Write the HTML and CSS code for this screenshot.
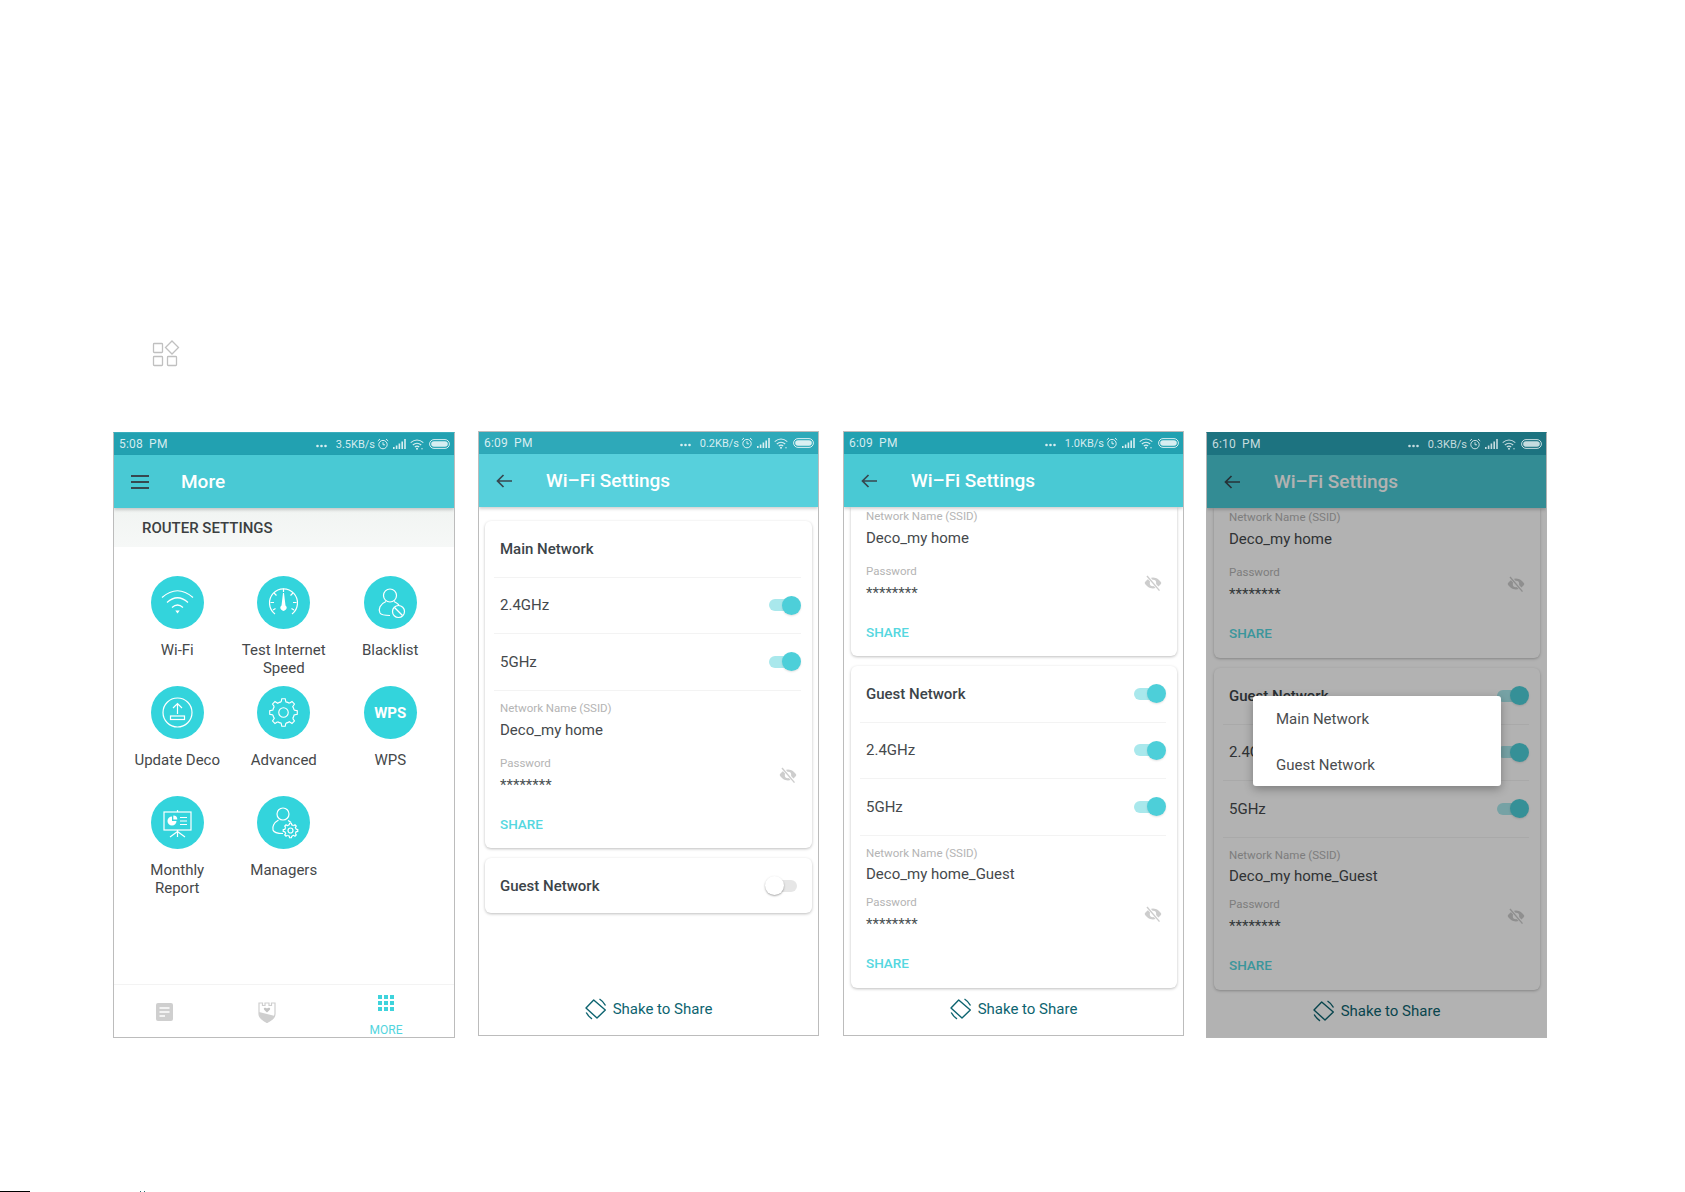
FILE: index.html
```html
<!DOCTYPE html>
<html lang="en">
<head>
<meta charset="utf-8">
<title>Wi-Fi Settings</title>
<link rel="stylesheet" href="styles.css">
</head>
<body>
<svg class="sprite" width="0" height="0" aria-hidden="true">
  <defs>
    <g id="gear-seg"><path d="M-2.5 -11.2 L-1.8 -14.5 L1.8 -14.5 L2.5 -11.2 A11.5 11.5 0 0 1 6.15 -9.69"/></g>
    <g id="gear">
      <use href="#gear-seg"/><use href="#gear-seg" transform="rotate(45)"/><use href="#gear-seg" transform="rotate(90)"/><use href="#gear-seg" transform="rotate(135)"/>
      <use href="#gear-seg" transform="rotate(180)"/><use href="#gear-seg" transform="rotate(225)"/><use href="#gear-seg" transform="rotate(270)"/><use href="#gear-seg" transform="rotate(315)"/>
    </g>
    <symbol id="st-dots" viewBox="0 0 11 4"><circle cx="1.5" cy="2" r="1.3"/><circle cx="5.5" cy="2" r="1.3"/><circle cx="9.5" cy="2" r="1.3"/></symbol>
    <symbol id="st-alarm" viewBox="0 0 12 12"><g fill="none" stroke="currentColor"><circle cx="6" cy="6.6" r="4.2"/><path d="M6 4.2V6.8H8M.8 3 3 1M11.2 3 9 1"/></g></symbol>
    <symbol id="st-signal" viewBox="0 0 13 10"><rect x="0" y="8" width="1.6" height="2"/><rect x="2.8" y="6.5" width="1.6" height="3.5"/><rect x="5.6" y="4.5" width="1.6" height="5.5"/><rect x="8.4" y="2.5" width="1.6" height="7.5"/><rect x="11.2" y="0" width="1.6" height="10"/></symbol>
    <symbol id="st-wifi" viewBox="0 0 14 11"><g fill="none" stroke="currentColor" stroke-width="1.1"><path d="M.7 3.6Q7-1.6 13.3 3.6"/><path d="M2.8 6Q7 2.4 11.2 6"/><path d="M4.8 8Q7 6.2 9.2 8"/></g><circle cx="7" cy="9.8" r="1"/><circle cx="12" cy="9.8" r=".7"/></symbol>
    <symbol id="st-batt" viewBox="0 0 21 10"><rect x=".6" y=".6" width="19.8" height="8.8" rx="4.4" fill="none" stroke="currentColor"/><rect x="2.2" y="2.2" width="16.6" height="5.6" rx="2.8"/></symbol>
    <symbol id="eye" viewBox="0 0 18 18"><path fill-rule="evenodd" d="M9 3.5C5 3.5 2 6.5.6 9 2 11.5 5 14.5 9 14.5s7-3 8.4-5.5C16 6.5 13 3.5 9 3.5zM9 5.8a3.2 3.2 0 1 1 0 6.4 3.2 3.2 0 0 1 0-6.4z"/><path d="M3.5 2.2 15.5 16.2" stroke="#fff" stroke-width="3"/><path d="M3 2 15.5 16.6" stroke="currentColor" stroke-width="1.4"/></symbol>
    <symbol id="shake" viewBox="0 0 22 22"><g fill="none" stroke="currentColor" stroke-width="1.4" stroke-linejoin="round"><path d="M8.700 2 20.300 12 12 20 1 10Z"/><path d="M14.500 1Q18.500 3.500 20.500 7.500"/><path d="M1.200 14.500Q3.500 18.500 7 20.800"/></g></symbol>
  </defs>
</svg>

<div class="page">
  <svg class="top-icon" viewBox="0 0 30 28" width="30" height="28">
    <g fill="none" stroke="#c0c0c0" stroke-width="1.3">
      <rect x="3.5" y="3.5" width="9" height="9" rx=".8"/>
      <path d="M22 1 28.5 7.5 22 14 15.5 7.5Z"/>
      <rect x="3.5" y="16.5" width="9" height="9" rx=".8"/>
      <rect x="17.5" y="16.5" width="9" height="9" rx=".8"/>
    </g>
  </svg>

  <main class="stage">
    <!-- More -->
    <section class="phone phone--more">
      <div class="status">
        <span class="time">5:08 PM</span>
        <svg class="st-dots"><use href="#st-dots"/></svg>
        <span class="speed">3.5KB/s</span>
        <svg class="st-alarm"><use href="#st-alarm"/></svg>
        <svg class="st-signal"><use href="#st-signal"/></svg>
        <svg class="st-wifi"><use href="#st-wifi"/></svg>
        <svg class="st-batt"><use href="#st-batt"/></svg>
      </div>
      <header class="appbar">
        <span class="burger"><i></i><i></i><i></i></span>
        <h1 class="appbar-title">More</h1>
      </header>
      <div class="section-head">ROUTER SETTINGS</div>
      <div class="tiles">
        <div class="tile">
          <svg class="tile-icon" viewBox="0 0 53 53"><circle class="disc" cx="26.5" cy="26.5" r="26.5"/><g class="ln"><path d="M11 21.5Q26.5 8 42 21.5"/><path d="M16 26.5Q26.5 17 37 26.5"/><path d="M21 31.5Q26.5 26.5 32 31.5"/></g><path class="sol" d="M24.3 34.5H28.7L26.5 37.5Z"/></svg>
          <span class="tile-label">Wi-Fi</span>
        </div>
        <div class="tile">
          <svg class="tile-icon" viewBox="0 0 53 53"><circle class="disc" cx="26.5" cy="26.5" r="26.5"/><g class="ln"><path d="M18 38A14 14 0 1 1 35 38"/><path d="M26.5 12.500V16M13.500 26.500H17M39.500 26.500H36M17 17 19.500 19.500M36 17 33.500 19.500M16 34 18.500 32.500M37 34 34.500 32.500"/></g><path class="sol" d="M26 17H27L28.500 29.500A3 3 0 1 1 24.500 29.500Z"/></svg>
          <span class="tile-label">Test Internet<br>Speed</span>
        </div>
        <div class="tile">
          <svg class="tile-icon" viewBox="0 0 53 53"><circle class="disc" cx="26.5" cy="26.5" r="26.500"/><g class="ln"><circle cx="26" cy="19.500" r="6.500"/><path d="M22 25.500C16 28 14 33 16 37 17.500 39.500 21 39.500 26 39.500"/><path d="M30 25.500C32 26.500 33.500 27.500 35 29"/><circle cx="34.500" cy="35.500" r="6"/><path d="M30.500 31.500 38.500 39.500"/></g></svg>
          <span class="tile-label">Blacklist</span>
        </div>
        <div class="tile">
          <svg class="tile-icon" viewBox="0 0 53 53"><circle class="disc" cx="26.5" cy="26.5" r="26.500"/><g class="ln"><circle cx="26.500" cy="26.500" r="14.500"/><path d="M26.500 28V18M22 22 26.500 17.500 31 22"/><rect x="19.500" y="30" width="14" height="3.500"/></g></svg>
          <span class="tile-label">Update Deco</span>
        </div>
        <div class="tile">
          <svg class="tile-icon" viewBox="0 0 53 53"><circle class="disc" cx="26.5" cy="26.5" r="26.500"/><g class="ln" transform="translate(26.500 26.500) scale(.95)"><use href="#gear"/><circle r="5"/></g></svg>
          <span class="tile-label">Advanced</span>
        </div>
        <div class="tile">
          <span class="tile-icon tile-icon--text">WPS</span>
          <span class="tile-label">WPS</span>
        </div>
        <div class="tile">
          <svg class="tile-icon" viewBox="0 0 53 53"><circle class="disc" cx="26.5" cy="26.5" r="26.500"/><g class="ln"><rect x="13" y="16" width="27" height="18"/><path d="M26.500 14V16M26.500 34V38M19 41 26.500 35.500 34 41M26.500 38V41"/><path d="M29 21.500H36M29 25H36M29 28.500H36"/></g><path class="sol" d="M21 20.500A4.500 4.500 0 1 0 25.500 25H21ZM22.300 19.500V23.500H26.300A4 4 0 0 0 22.300 19.500Z"/></svg>
          <span class="tile-label">Monthly<br>Report</span>
        </div>
        <div class="tile">
          <svg class="tile-icon" viewBox="0 0 53 53"><circle class="disc" cx="26.5" cy="26.5" r="26.500"/><g class="ln"><circle cx="26" cy="18" r="6"/><path d="M21.500 24C17 26.500 15 31 16 34 17 37 20 37.500 26 37.500"/><path d="M31 24.500C32 25 33 25.500 34 26.500"/><g transform="translate(33.500 34.500) scale(.5)" stroke-width="2.400"><use href="#gear"/><circle r="5"/></g></g></svg>
          <span class="tile-label">Managers</span>
        </div>
      </div>
      <nav class="tabs">
        <div class="tab tab--low">
          <svg class="tab-doc" viewBox="0 0 17 18"><rect width="17" height="18" rx="2" fill="#cfcfcf"/><path d="M3.500 5H13.500M3.500 9H13.500M3.500 13H9" stroke="#fff" stroke-width="1.600"/></svg>
        </div>
        <div class="tab tab--low">
          <svg class="tab-shield" viewBox="0 0 18 21"><path d="M1 1V12C1 16 5 18.500 9 20.500 13 18.500 17 16 17 12V1L13.500 1V3.500H11V1H7V3.500H4.500V1Z" fill="#fff" stroke="#cfcfcf" stroke-width="1.200"/><path d="M1 10 17 14C16 17 13 18.500 9 20.500 5 18.500 2 16 1 12Z" fill="#cfcfcf"/><path d="M9 10.500C7 8.500 5.800 8 5.800 6.800 5.800 5.500 7.800 5.200 9 6.500 10.200 5.200 12.200 5.500 12.200 6.800 12.200 8 11 8.500 9 10.500Z" fill="#c4c4c4"/></svg>
        </div>
        <div class="tab tab--active">
          <svg class="tab-grid" viewBox="0 0 16 16"><g fill="#3ed3dc"><rect width="4" height="4"/><rect x="6" width="4" height="4"/><rect x="12" width="4" height="4"/><rect y="6" width="4" height="4"/><rect x="6" y="6" width="4" height="4"/><rect x="12" y="6" width="4" height="4"/><rect y="12" width="4" height="4"/><rect x="6" y="12" width="4" height="4"/><rect x="12" y="12" width="4" height="4"/></g></svg>
          <span class="tab-label">MORE</span>
        </div>
      </nav>
    </section>

    <!-- Wi-Fi Settings, main network only -->
    <section class="phone phone--settings phone--light">
      <div class="status">
        <span class="time">6:09 PM</span>
        <svg class="st-dots"><use href="#st-dots"/></svg>
        <span class="speed">0.2KB/s</span>
        <svg class="st-alarm"><use href="#st-alarm"/></svg>
        <svg class="st-signal"><use href="#st-signal"/></svg>
        <svg class="st-wifi"><use href="#st-wifi"/></svg>
        <svg class="st-batt"><use href="#st-batt"/></svg>
      </div>
      <header class="appbar">
        <svg class="back" viewBox="0 0 16 14"><path d="M16 7H1.500M7.500 1 1.500 7 7.500 13" fill="none" stroke="currentColor" stroke-width="1.700"/></svg>
        <h1 class="appbar-title">Wi–Fi Settings</h1>
      </header>
      <div class="content content--padded">
        <div class="card">
          <div class="row"><strong class="row-title">Main Network</strong></div>
          <div class="row"><span>2.4GHz</span><span class="toggle"></span></div>
          <div class="row"><span>5GHz</span><span class="toggle"></span></div>
          <div class="fields">
            <div class="field-label">Network Name (SSID)</div>
            <div class="field-value">Deco_my home</div>
            <div class="pw">
              <div>
                <div class="field-label">Password</div>
                <div class="stars">********</div>
              </div>
              <svg class="eye"><use href="#eye"/></svg>
            </div>
            <div class="share">SHARE</div>
          </div>
        </div>
        <div class="card">
          <div class="row row--last"><strong class="row-title">Guest Network</strong><span class="toggle toggle--off"></span></div>
        </div>
      </div>
      <div class="shake"><svg class="shake-icon"><use href="#shake"/></svg><span>Shake to Share</span></div>
    </section>

    <!-- Wi-Fi Settings, scrolled -->
    <section class="phone phone--settings phone--scrolled">
      <div class="status">
        <span class="time">6:09 PM</span>
        <svg class="st-dots"><use href="#st-dots"/></svg>
        <span class="speed">1.0KB/s</span>
        <svg class="st-alarm"><use href="#st-alarm"/></svg>
        <svg class="st-signal"><use href="#st-signal"/></svg>
        <svg class="st-wifi"><use href="#st-wifi"/></svg>
        <svg class="st-batt"><use href="#st-batt"/></svg>
      </div>
      <header class="appbar">
        <svg class="back" viewBox="0 0 16 14"><path d="M16 7H1.500M7.500 1 1.500 7 7.500 13" fill="none" stroke="currentColor" stroke-width="1.700"/></svg>
        <h1 class="appbar-title">Wi–Fi Settings</h1>
      </header>
      <div class="content">
        <div class="card card--cut">
          <div class="fields fields--cut">
            <div class="field-label">Network Name (SSID)</div>
            <div class="field-value">Deco_my home</div>
            <div class="pw">
              <div>
                <div class="field-label">Password</div>
                <div class="stars">********</div>
              </div>
              <svg class="eye"><use href="#eye"/></svg>
            </div>
            <div class="share">SHARE</div>
          </div>
        </div>
        <div class="card">
          <div class="row"><strong class="row-title">Guest Network</strong><span class="toggle"></span></div>
          <div class="row"><span>2.4GHz</span><span class="toggle"></span></div>
          <div class="row"><span>5GHz</span><span class="toggle"></span></div>
          <div class="fields fields--tight">
            <div class="field-label">Network Name (SSID)</div>
            <div class="field-value">Deco_my home_Guest</div>
            <div class="pw">
              <div>
                <div class="field-label">Password</div>
                <div class="stars">********</div>
              </div>
              <svg class="eye"><use href="#eye"/></svg>
            </div>
            <div class="share">SHARE</div>
          </div>
        </div>
      </div>
      <div class="shake"><svg class="shake-icon"><use href="#shake"/></svg><span>Shake to Share</span></div>
    </section>

    <!-- Wi-Fi Settings, share menu open -->
    <section class="phone phone--settings phone--scrolled phone--dim">
      <div class="status">
        <span class="time">6:10 PM</span>
        <svg class="st-dots"><use href="#st-dots"/></svg>
        <span class="speed">0.3KB/s</span>
        <svg class="st-alarm"><use href="#st-alarm"/></svg>
        <svg class="st-signal"><use href="#st-signal"/></svg>
        <svg class="st-wifi"><use href="#st-wifi"/></svg>
        <svg class="st-batt"><use href="#st-batt"/></svg>
      </div>
      <header class="appbar">
        <svg class="back" viewBox="0 0 16 14"><path d="M16 7H1.500M7.500 1 1.500 7 7.500 13" fill="none" stroke="currentColor" stroke-width="1.700"/></svg>
        <h1 class="appbar-title">Wi–Fi Settings</h1>
      </header>
      <div class="content">
        <div class="card card--cut">
          <div class="fields fields--cut fields--cut-tall">
            <div class="field-label">Network Name (SSID)</div>
            <div class="field-value">Deco_my home</div>
            <div class="pw">
              <div>
                <div class="field-label">Password</div>
                <div class="stars">********</div>
              </div>
              <svg class="eye"><use href="#eye"/></svg>
            </div>
            <div class="share">SHARE</div>
          </div>
        </div>
        <div class="card">
          <div class="row"><strong class="row-title">Guest Network</strong><span class="toggle"></span></div>
          <div class="row"><span>2.4GHz</span><span class="toggle"></span></div>
          <div class="row"><span>5GHz</span><span class="toggle"></span></div>
          <div class="fields fields--tight">
            <div class="field-label">Network Name (SSID)</div>
            <div class="field-value">Deco_my home_Guest</div>
            <div class="pw">
              <div>
                <div class="field-label">Password</div>
                <div class="stars">********</div>
              </div>
              <svg class="eye"><use href="#eye"/></svg>
            </div>
            <div class="share">SHARE</div>
          </div>
        </div>
      </div>
      <div class="shake"><svg class="shake-icon"><use href="#shake"/></svg><span>Shake to Share</span></div>
      <div class="scrim"></div>
      <div class="menu">
        <div class="menu-item">Main Network</div>
        <div class="menu-item">Guest Network</div>
      </div>
    </section>
  </main>

  <footer class="edge">
    <span class="edge-rule"></span>
    <span class="edge-tick"></span>
    <span class="edge-tick"></span>
  </footer>
</div>
</body>
</html>
```

FILE: styles.css
```css
* { box-sizing: border-box; }

html, body {
  margin: 0;
  height: 1192px;
  overflow: hidden;
  background: #fff;
  font-family: Roboto, "Liberation Sans", sans-serif;
}

.sprite { position: absolute; }

.page {
  height: 1192px;
  display: flex;
  flex-direction: column;
  align-items: flex-start;
}

.top-icon {
  display: block;
  margin: 340px 0 0 150px;
  flex: none;
}

.stage {
  display: flex;
  align-items: flex-start;
  gap: 23px;
  margin: 63px 0 0 113px;
}

/* Phone frame */
.phone {
  --status: #22a1b1;
  --bar: #49c9d4;
  position: relative;
  flex: none;
  width: 342px;
  height: 605px;
  display: flex;
  flex-direction: column;
  overflow: hidden;
  background: #fff;
  border: 1px solid #bcbcbc;
  color: #444;
}

.phone--settings { width: 341px; }

.phone--more {
  height: 606px;
  margin-top: 1px;
  border-top-color: #3aaebd;
}

.phone--light {
  --status: #2ea9b9;
  --bar: #57d0dc;
}

.phone--scrolled { margin-left: 1px; }

.phone--dim {
  height: 606px;
  margin: 1px 0 0 -1px;
  border-color: #b3b3b3;
  border-top-color: #1d7380;
}

/* Status bar */
.status {
  flex: none;
  height: 22px;
  display: flex;
  align-items: center;
  padding: 0 4px 0 5px;
  background: var(--status);
  color: rgba(255, 255, 255, .82);
  font-size: 12px;
}

.phone--dim .status {
  position: relative;
  z-index: 4;
  background: #1d7380;
  color: rgba(255, 255, 255, .75);
}

.time { word-spacing: 3px; letter-spacing: .2px; }
.speed { font-size: 11px; margin-left: 9px; }

.status svg { fill: currentColor; flex: none; display: block; }
.st-dots { width: 11px; height: 4px; margin-left: auto; margin-top: 4px; }
.st-alarm { width: 12px; height: 12px; margin-left: 2px; }
.st-signal { width: 13px; height: 10px; margin-left: 4px; }
.st-wifi { width: 14px; height: 11px; margin-left: 4px; }
.st-batt { width: 21px; height: 10px; margin-left: 5px; }

/* App bar */
.appbar {
  flex: none;
  position: relative;
  z-index: 2;
  height: 53px;
  display: flex;
  align-items: center;
  background: var(--bar);
  box-shadow: 0 2px 3px rgba(0, 0, 0, .18);
  color: #fff;
}

.appbar-title {
  margin: 0;
  font-size: 19px;
  font-weight: 500;
  line-height: 24px;
}

.burger {
  display: flex;
  flex-direction: column;
  gap: 4px;
  width: 18px;
  margin: 0 32px 0 17px;
}

.burger i {
  display: block;
  height: 2px;
  background: #37474f;
}

.back {
  width: 16px;
  height: 14px;
  margin: 0 34px 0 17px;
  color: #37474f;
}

/* More screen */
.section-head {
  flex: none;
  height: 39px;
  padding-left: 28px;
  line-height: 40px;
  font-size: 15px;
  font-weight: 500;
  color: #3c3f41;
  background: linear-gradient(#f1f4f2, #f6f8f7);
}

.tiles {
  display: grid;
  grid-template-columns: repeat(3, 106.5px);
  grid-auto-rows: 110px;
  padding: 29px 10px 0;
}

.tile {
  display: flex;
  flex-direction: column;
  align-items: center;
}

.tile-icon {
  display: block;
  width: 53px;
  height: 53px;
  flex: none;
}

.tile-icon--text {
  border-radius: 50%;
  background: #33d4dc;
  color: #fff;
  font-size: 15px;
  font-weight: 700;
  line-height: 55px;
  text-align: center;
}

.disc { fill: #33d4dc; }
.ln { fill: none; stroke: #fff; stroke-width: 1.2; }
.sol { fill: #fff; }

.tile-label {
  margin-top: 12px;
  font-size: 15px;
  line-height: 18px;
  color: #45484a;
  text-align: center;
}

.tabs {
  margin-top: auto;
  flex: none;
  height: 53px;
  display: grid;
  grid-template-columns: 100px 106px 132px;
  border-top: 1px solid #f3f3f3;
}

.tab {
  display: flex;
  flex-direction: column;
  align-items: center;
}

.tab--low { padding-top: 18px; }
.tab--active { padding-top: 10px; }

.tab-doc { width: 17px; height: 18px; }
.tab-shield { width: 18px; height: 21px; margin-top: -1px; }
.tab-grid { width: 16px; height: 16px; }

.tab-label {
  margin-top: 12px;
  font-size: 12px;
  line-height: 14px;
  color: #52d5de;
}

/* Cards */
.content {
  flex: 1;
  min-height: 0;
  padding: 0 6px;
  display: flex;
  flex-direction: column;
  gap: 10px;
}

.phone--scrolled .content { padding-left: 7px; }

.content--padded { padding-top: 14px; }

.card {
  flex: none;
  background: #fff;
  border-radius: 6px;
  box-shadow: 0 1px 3px rgba(0, 0, 0, .26);
}

.card--cut { border-radius: 0 0 6px 6px; }

.row {
  height: 56.5px;
  margin: 0 11px 0 9px;
  padding-left: 6px;
  display: flex;
  align-items: center;
  justify-content: space-between;
  border-bottom: 1px solid #f3f3f3;
  font-size: 15px;
  color: #45494c;
}

.row--last { border-bottom: 0; height: 55px; }

.row-title {
  font-weight: 500;
  color: #3c4449;
}

.toggle {
  position: relative;
  width: 32px;
  height: 19px;
  flex: none;
}

.toggle::before {
  content: "";
  position: absolute;
  left: 0;
  top: 3.5px;
  width: 26px;
  height: 12px;
  border-radius: 6px;
  background: #a9e8ec;
}

.toggle::after {
  content: "";
  position: absolute;
  right: 0;
  top: 0;
  width: 19px;
  height: 19px;
  border-radius: 50%;
  background: #4dcfd9;
  box-shadow: 0 1px 2px rgba(0, 0, 0, .12);
}

.toggle--off { margin-right: 4px; }
.toggle--off::before { left: 3px; width: 29px; background: #e6e6e6; }
.toggle--off::after { right: auto; left: 0; background: #fff; box-shadow: 0 1px 2px rgba(0, 0, 0, .35); }

.fields {
  padding: 10.5px 15px 15px;
  color: #45494c;
}

.fields--cut { padding-top: 2px; padding-bottom: 15px; }
.fields--cut-tall { padding-bottom: 16px; }
.fields--tight { padding-top: 10px; padding-bottom: 16px; }

.field-label {
  font-size: 11.5px;
  line-height: 14px;
  color: #b4b4b4;
}

.field-value {
  margin-top: 5px;
  font-size: 15px;
  line-height: 20px;
  color: #45494c;
}

.pw {
  display: flex;
  justify-content: space-between;
  margin-top: 16px;
}

.fields--tight .field-value { margin-top: 4px; }
.fields--tight .pw { margin-top: 11px; }

.stars {
  margin-top: 8px;
  font-size: 15px;
  line-height: 14px;
  color: #4a5053;
}

.eye {
  width: 18px;
  height: 18px;
  margin-top: 10px;
  fill: #cdcdcd;
  color: #cdcdcd;
}

.share {
  margin-top: 23px;
  font-size: 13.5px;
  font-weight: 500;
  line-height: 18px;
  color: #55d7e0;
}

/* Shake to share */
.shake {
  flex: none;
  height: 36px;
  padding-bottom: 16px;
  display: flex;
  align-items: center;
  justify-content: center;
  gap: 6px;
  font-size: 15px;
  line-height: 20px;
  color: #0d6470;
}

.shake-icon {
  width: 22px;
  height: 22px;
  flex: none;
}

/* Dim layer and menu */
.scrim {
  position: absolute;
  inset: 0;
  z-index: 3;
  background: rgba(0, 0, 0, .3);
}

.menu {
  position: absolute;
  z-index: 4;
  left: 46px;
  top: 263px;
  width: 248px;
  height: 90px;
  padding-top: 1px;
  border-radius: 3px;
  background: #fff;
  box-shadow: 0 3px 10px rgba(0, 0, 0, .3);
}

.menu-item {
  height: 45.5px;
  padding-left: 23px;
  font-size: 15px;
  line-height: 45px;
  color: #4a4d4f;
}

/* Cropped bottom edge of the page */
.edge {
  margin-top: auto;
  width: 100%;
  height: 1px;
  display: flex;
  gap: 3px;
  flex: none;
}

.edge-rule {
  width: 30px;
  margin-right: 107px;
  background: #000;
}

.edge-tick {
  width: 1px;
  background: #2a6a70;
}
```
